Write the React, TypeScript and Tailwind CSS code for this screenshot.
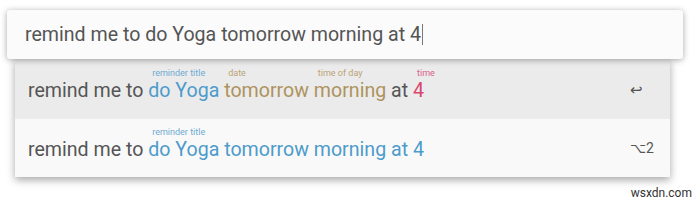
const font = { fontFamily: "Roboto, 'Liberation Sans', sans-serif" };

function Tagged({
  label,
  color,
  labelColor,
  children,
}: {
  label?: string;
  color: string;
  labelColor?: string;
  children: React.ReactNode;
}) {
  return (
    <span className={`relative ${color}`}>
      {label && (
        <span
          className={`absolute left-[4px] top-[-10px] whitespace-nowrap text-[9px] leading-none ${labelColor}`}
        >
          {label}
        </span>
      )}
      {children}
    </span>
  );
}

export default function App() {
  return (
    <div className="w-[700px] h-[203px] bg-white relative overflow-hidden" style={font}>
      <div className="pt-[10px] pl-[7px]">
        <div className="relative z-10 w-[676px] h-[49px] bg-[#fbfbfb] rounded-[3px] shadow-[0_1px_6px_rgba(0,0,0,0.35)] flex items-center pl-[18px]">
          <span className="text-[19.6px] text-[#555]">remind me to do Yoga tomorrow morning at 4</span>
          <span className="w-px h-[21px] bg-[#777] ml-[1px]" />
        </div>
      </div>
      <div className="ml-[15px] w-[655px] shadow-[0_3px_8px_rgba(0,0,0,0.35)]">
        <div className="h-[60px] bg-[#ebebeb] flex items-center pl-[13px] pt-[2px]">
          <div className="flex-1 text-[19.6px] text-[#555] mt-[1px]">
            remind me to{" "}
            <Tagged label="reminder title" color="text-[#4d9bcb]" labelColor="text-[#6eaad3]">
              do Yoga
            </Tagged>{" "}
            <Tagged label="date" color="text-[#ae935e]" labelColor="text-[#bba377]">
              tomorrow
            </Tagged>{" "}
            <Tagged label="time of day" color="text-[#ae935e]" labelColor="text-[#bba377]">
              morning
            </Tagged>{" "}
            at{" "}
            <Tagged label="time" color="text-[#d9466e]" labelColor="text-[#d8638a]">
              4
            </Tagged>
          </div>
          <div className="w-[40px] text-[15px] text-[#555]">↩</div>
        </div>
        <div className="h-[58px] bg-[#f9f9f9] flex items-center pl-[13px]">
          <div className="flex-1 text-[19.6px] text-[#555] mt-[4px]">
            remind me to{" "}
            <Tagged label="reminder title" color="text-[#4d9bcb]" labelColor="text-[#6eaad3]">
              do Yoga tomorrow morning at 4
            </Tagged>
          </div>
          <div className="w-[40px] text-[14px] text-[#555]">⌥2</div>
        </div>
      </div>
      <div className="absolute right-[8px] bottom-[1px] text-[12px] text-[#333]">wsxdn.com</div>
    </div>
  );
}
